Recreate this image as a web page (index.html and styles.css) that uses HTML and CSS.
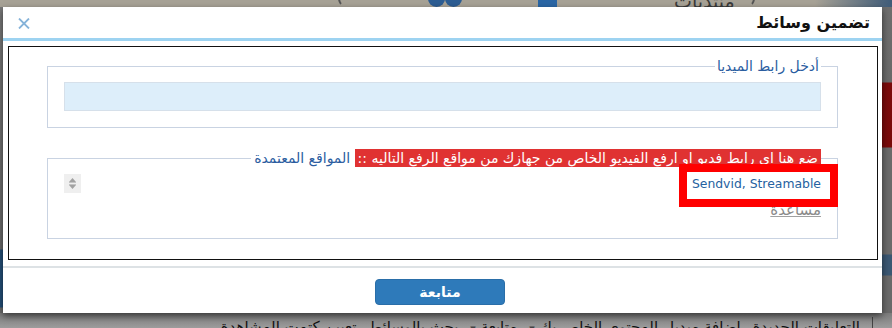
FILE: index.html
```html
<!DOCTYPE html>
<html lang="ar">
<head>
<meta charset="utf-8">
<title>تضمين وسائط</title>
<link rel="stylesheet" href="styles.css">
</head>
<body>
<div class="screen">
  <div class="bd-top">
    <span class="bd-arc bd-arc-a"></span>
    <span class="bd-dot bd-dot-first"></span><span class="bd-dot"></span>
    <span class="bd-square"></span>
    <span class="bd-word">منتديات</span>
    <span class="bd-arc bd-arc-b"></span>
    <span class="bd-end"></span>
  </div>
  <div class="bd-mid">
    <div class="bd-side bd-left"></div>
    <div class="modal" dir="rtl">
      <div class="modal-head">
        <h2 class="modal-title">تضمين وسائط</h2>
        <button class="modal-close" type="button" aria-label="close">
          <svg width="12" height="11" viewBox="0 0 12 11"><path d="M1 0.5 L11 10.5 M11 0.5 L1 10.5" stroke="#86b3d9" stroke-width="1.8" fill="none"/></svg>
        </button>
      </div>
      <div class="modal-body">
        <div class="frame">
          <fieldset class="fs fs-url">
            <legend class="fs-legend">أدخل رابط الميديا</legend>
            <input class="url-input" type="text">
          </fieldset>
          <fieldset class="fs fs-sites">
            <legend class="fs-legend fs-legend-sites"><span class="warn">ضع هنا اى رابط فديو او ارفع الفيديو الخاص من جهازك من مواقع الرفع التاليه ::</span> المواقع المعتمدة</legend>
            <div class="sites-row">
              <a class="sites-link">Sendvid, Streamable</a>
              <span class="spin">
                <svg width="17" height="19" viewBox="0 0 17 19"><path d="M5 8 L8.5 4 L12 8 Z M5 11 L12 11 L8.5 15 Z" fill="#a2a2a2"/><path d="M5 8.5 H12 M5 10.5 H12" stroke="#c4c4c4" stroke-width="1"/></svg>
              </span>
            </div>
            <a class="help-link">مساعدة</a>
          </fieldset>
        </div>
      </div>
      <div class="modal-foot">
        <button class="btn-next" type="button">متابعة</button>
      </div>
    </div>
    <div class="bd-side bd-right"></div>
  </div>
  <div class="bd-nav" dir="rtl">
    <span class="nav-sep"></span>
    <span class="nav-item">التعليقات الجديدة</span>
    <span class="nav-item">اضافة ميديا</span>
    <span class="nav-item">المحتوى الخاص بك <i class="caret">▾</i></span>
    <span class="nav-item">متابعة <i class="caret">▾</i></span>
    <span class="nav-item">بحث بالوسائط</span>
    <span class="nav-item">تعيين كتمت المشاهدة</span>
  </div>
</div>
</body>
</html>
```

FILE: styles.css
```css
* { box-sizing: border-box; }
html, body { margin: 0; padding: 0; }
body {
  width: 892px;
  height: 328px;
  overflow: hidden;
  background: #767676;
  font-family: "DejaVu Sans", sans-serif;
}
.screen { display: flex; flex-direction: column; height: 328px; }

/* dimmed page behind the dialog */
.bd-top {
  flex: none;
  height: 7px;
  overflow: hidden;
  display: flex;
  align-items: flex-end;
  background: #a7a296;
}
.bd-arc { flex: none; width: 14px; height: 18px; border: 2px solid #4a4a4a; border-radius: 50%; }
.bd-arc-a { margin-left: 338px; border-color: transparent transparent transparent #555; }
.bd-dot { flex: none; width: 17px; height: 17px; border-radius: 50%; background: #2d5d93; }
.bd-dot-first { margin-left: 76px; }
.bd-square { flex: none; width: 19px; height: 10px; background: #2a66a5; margin-left: 76px; }
.bd-word { flex: none; margin-left: 117px; font-size: 19px; line-height: 12px; color: #3a3a3a; }
.bd-arc-b { margin-left: 6px; border-color: transparent #555 transparent transparent; }
.bd-end { flex: 1; height: 7px; margin-left: 60px; background: linear-gradient(90deg, #a7a296, #3f5b78); }

.bd-mid { flex: none; height: 306px; display: flex; }
.bd-side { flex: none; height: 306px; }
.bd-left {
  width: 3px;
  background: linear-gradient(#7a7a7a 0, #6c6c6c 242px, #244f78 243px, #244f78 300px, #6c6c6c 301px);
}
.bd-right {
  width: 10px;
  background: linear-gradient(#6e6e6e 0, #6a6a6a 75px, #7c0b0b 76px, #7a0a0a 140px, #6b6b6b 141px, #6b6b6b 247px, #3b5873 248px, #3b5873 268px, #6a6a6a 269px);
}

/* dialog */
.modal {
  flex: none;
  width: 879px;
  height: 306px;
  background: #fff;
  display: flex;
  flex-direction: column;
  position: relative;
  z-index: 1;
  box-shadow: 0 3px 7px rgba(0, 0, 0, 0.55);
}
.modal-head {
  flex: none;
  height: 34px;
  border-bottom: 3px solid #9dd3f1;
  display: flex;
  align-items: center;
  justify-content: space-between;
  padding: 1px 12px 0 15px;
}
.modal-title {
  margin: 0;
  font-size: 16px;
  font-weight: bold;
  color: #111;
  line-height: 20px;
}
.modal-close {
  border: 0;
  background: none;
  padding: 0;
  width: 12px;
  height: 11px;
  display: block;
}
.modal-close svg { display: block; }

.modal-body { flex: none; padding: 5px 4px 6px 5px; }
.frame {
  height: 214px;
  border: 1px solid #111;
  padding: 11px 39px 20px 38px;
}

.fs {
  margin: 0;
  border: 1px solid #c9d3e2;
  padding: 8px 16px 16px;
  min-width: 0;
}
.fs-legend {
  padding: 0 2px;
  font-size: 14px;
  line-height: 16px;
  color: #2b5d9f;
}
.url-input {
  display: block;
  width: 100%;
  height: 29px;
  margin: 0;
  border: 1px solid #d6e0ea;
  background: #ddeefa;
}

.fs-sites { margin-top: 21px; padding-top: 7px; padding-bottom: 20px; }
.fs-legend-sites { line-height: 18px; padding: 0 0 0 3px; }
.warn {
  display: inline-block;
  background: #e03232;
  color: #fff;
  padding: 0 3px;
  line-height: 18px;
}
.sites-row {
  height: 19px;
  display: flex;
  align-items: center;
  justify-content: space-between;
}
.sites-link {
  position: relative;
  font-size: 12.4px;
  line-height: 16px;
  color: #2561a0;
  direction: ltr;
}
.sites-link::after {
  content: "";
  position: absolute;
  top: -12px;
  bottom: -15px;
  left: -13px;
  right: -17px;
  border: 8px solid #ff0000;
}
.spin {
  display: block;
  width: 17px;
  height: 19px;
  background: #efefef;
}
.spin svg { display: block; }
.help-link {
  display: block;
  margin-top: 9px;
  width: max-content;
  font-size: 15px;
  line-height: 16px;
  color: #8a8a8a;
  text-decoration: underline;
  text-decoration-color: #a0a0a0;
}

.modal-foot {
  flex: 1;
  border-top: 2px solid #dde2e5;
  display: flex;
  justify-content: center;
  align-items: flex-start;
  padding: 11px 5px 0 0;
}
.btn-next {
  width: 130px;
  height: 26px;
  border: 1px solid #2a6ea8;
  border-radius: 4px;
  background: #2e7aba;
  color: #fff;
  font-family: "DejaVu Sans", sans-serif;
  font-size: 14px;
  font-weight: bold;
  padding: 0;
}

/* page nav bar peeking below */
.bd-nav {
  flex: none;
  height: 15px;
  overflow: hidden;
  background: linear-gradient(#7c7c7c, #9c9c9c);
  padding: 4px 19px 0 0;
  white-space: nowrap;
  font-size: 15px;
  line-height: 20px;
  color: #111;
  display: flex;
  gap: 12px;
}
.nav-sep { display: inline-block; width: 1px; height: 20px; background: #444; }
.caret { font-style: normal; color: #444; font-size: 11px; }
```
